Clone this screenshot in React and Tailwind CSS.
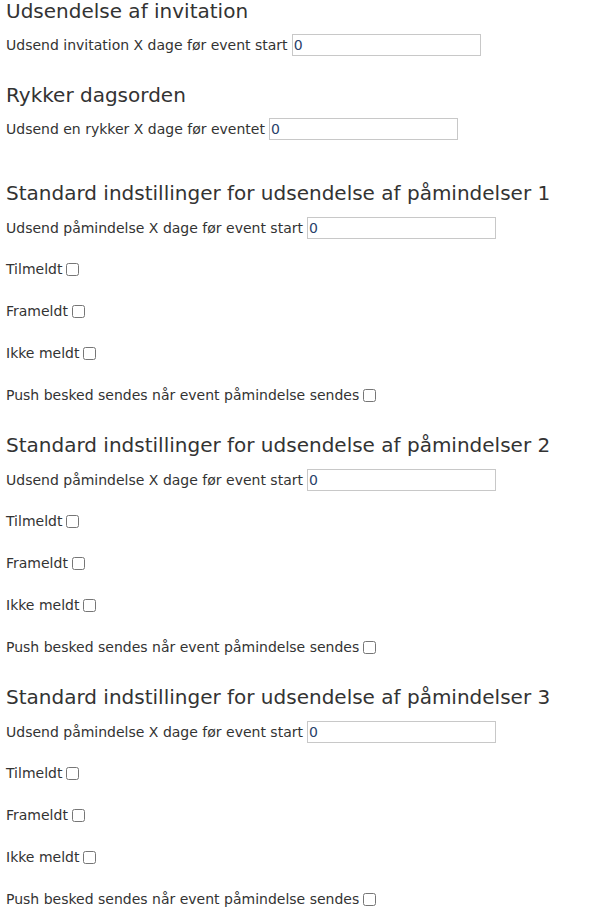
import { useState } from "react";

const Heading = ({ children, className = "" }) => (
  <h3 className={`text-[20px] leading-[22px] text-[#333] ${className}`}>{children}</h3>
);

const DaysField = ({ label, className = "" }) => {
  const [value, setValue] = useState("0");
  return (
    <div className={`flex h-[22px] items-center ${className}`}>
      <span>{label}</span>
      <input
        type="text"
        value={value}
        onChange={(e) => setValue(e.target.value)}
        className="ml-[4px] h-[22px] w-[189px] border border-[#c8c8c8] px-[1px] text-[14px] text-[#2a3f6b] outline-none"
      />
    </div>
  );
};

const CheckRow = ({ label, className = "" }) => (
  <div className={`flex h-[20px] items-center ${className}`}>
    <span>{label}</span>
    <input type="checkbox" className="ml-[4px] h-[13px] w-[13px]" />
  </div>
);

const ReminderBlock = ({ n, className = "" }) => (
  <section className={className}>
    <Heading>Standard indstillinger for udsendelse af påmindelser {n}</Heading>
    <DaysField label="Udsend påmindelse X dage før event start" className="mt-[13px]" />
    <CheckRow label="Tilmeldt" className="mt-[20px]" />
    <CheckRow label="Frameldt" className="mt-[22px]" />
    <CheckRow label="Ikke meldt" className="mt-[22px]" />
    <CheckRow label="Push besked sendes når event påmindelse sendes" className="mt-[22px]" />
  </section>
);

export default function App() {
  return (
    <div
      className="min-h-screen bg-white px-[6px] text-[14px] text-[#333]"
      style={{ fontFamily: '"DejaVu Sans", Verdana, sans-serif' }}
    >
      <Heading>Udsendelse af invitation</Heading>
      <DaysField label="Udsend invitation X dage før event start" className="mt-[12px]" />

      <Heading className="mt-[28px]">Rykker dagsorden</Heading>
      <DaysField label="Udsend en rykker X dage før eventet" className="mt-[12px]" />

      <ReminderBlock n={1} className="mt-[42px]" />
      <ReminderBlock n={2} className="mt-[29px]" />
      <ReminderBlock n={3} className="mt-[29px]" />
    </div>
  );
}
